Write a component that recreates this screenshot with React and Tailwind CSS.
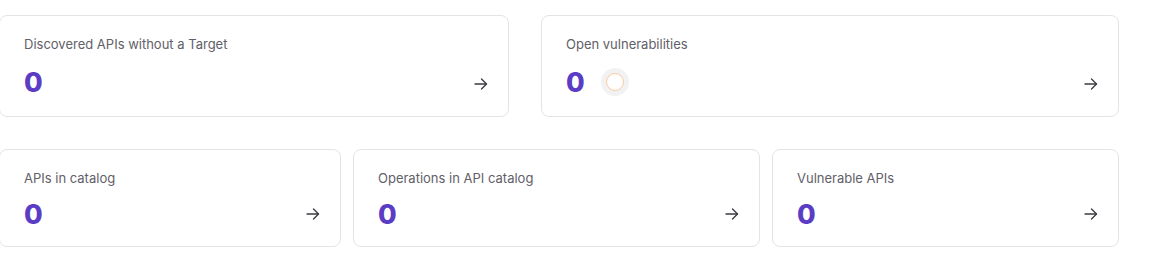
import React from 'react';

const ArrowIcon = () => (
    <svg width="14" height="12" viewBox="0 0 14 12" fill="none" stroke="#3a3a40" strokeWidth="1.3" strokeLinecap="round" strokeLinejoin="round">
        <path d="M1 6h11.5" />
        <path d="M7.5 1l5 5-5 5" />
    </svg>
);

const StatCard = ({ title, value, width, showRing }) => (
    <div className={`${width} shrink-0 bg-white border border-[#e4e4e7] rounded-lg pl-6 pr-5 pt-[18px] pb-5 flex flex-col`}>
        <p className="text-[13px] leading-5 text-[#5f6068]">{title}</p>
        <div className="mt-[14px] flex justify-between items-end flex-1">
            <div className="flex items-center self-center">
                <span className="text-[27px] leading-6 font-extrabold text-[#5b3dc5] translate-y-px">{value}</span>
                {showRing && (
                    <div className="ml-4 w-7 h-7 rounded-full bg-[#f2f2f4] flex items-center justify-center">
                        <div className="w-[18px] h-[18px] rounded-full bg-white border border-[#f9cd9c]"></div>
                    </div>
                )}
            </div>
            <div className="h-6 flex items-center">
                <ArrowIcon />
            </div>
        </div>
    </div>
);

export default function App() {
    return (
        <div className="w-[1150px] h-[262px] bg-white overflow-hidden" style={{ fontFamily: 'Inter, "Noto Sans", sans-serif' }}>
            <div className="-ml-px pt-[15px] flex flex-col gap-8">
                {/* Top row */}
                <div className="flex gap-8">
                    <StatCard title="Discovered APIs without a Target" value="0" width="w-[510px]" />
                    <StatCard title="Open vulnerabilities" value="0" width="w-[578px]" showRing />
                </div>

                {/* Bottom row */}
                <div className="flex gap-3">
                    <StatCard title="APIs in catalog" value="0" width="w-[342px]" />
                    <StatCard title="Operations in API catalog" value="0" width="w-[407px]" />
                    <StatCard title="Vulnerable APIs" value="0" width="w-[347px]" />
                </div>
            </div>
        </div>
    );
}
